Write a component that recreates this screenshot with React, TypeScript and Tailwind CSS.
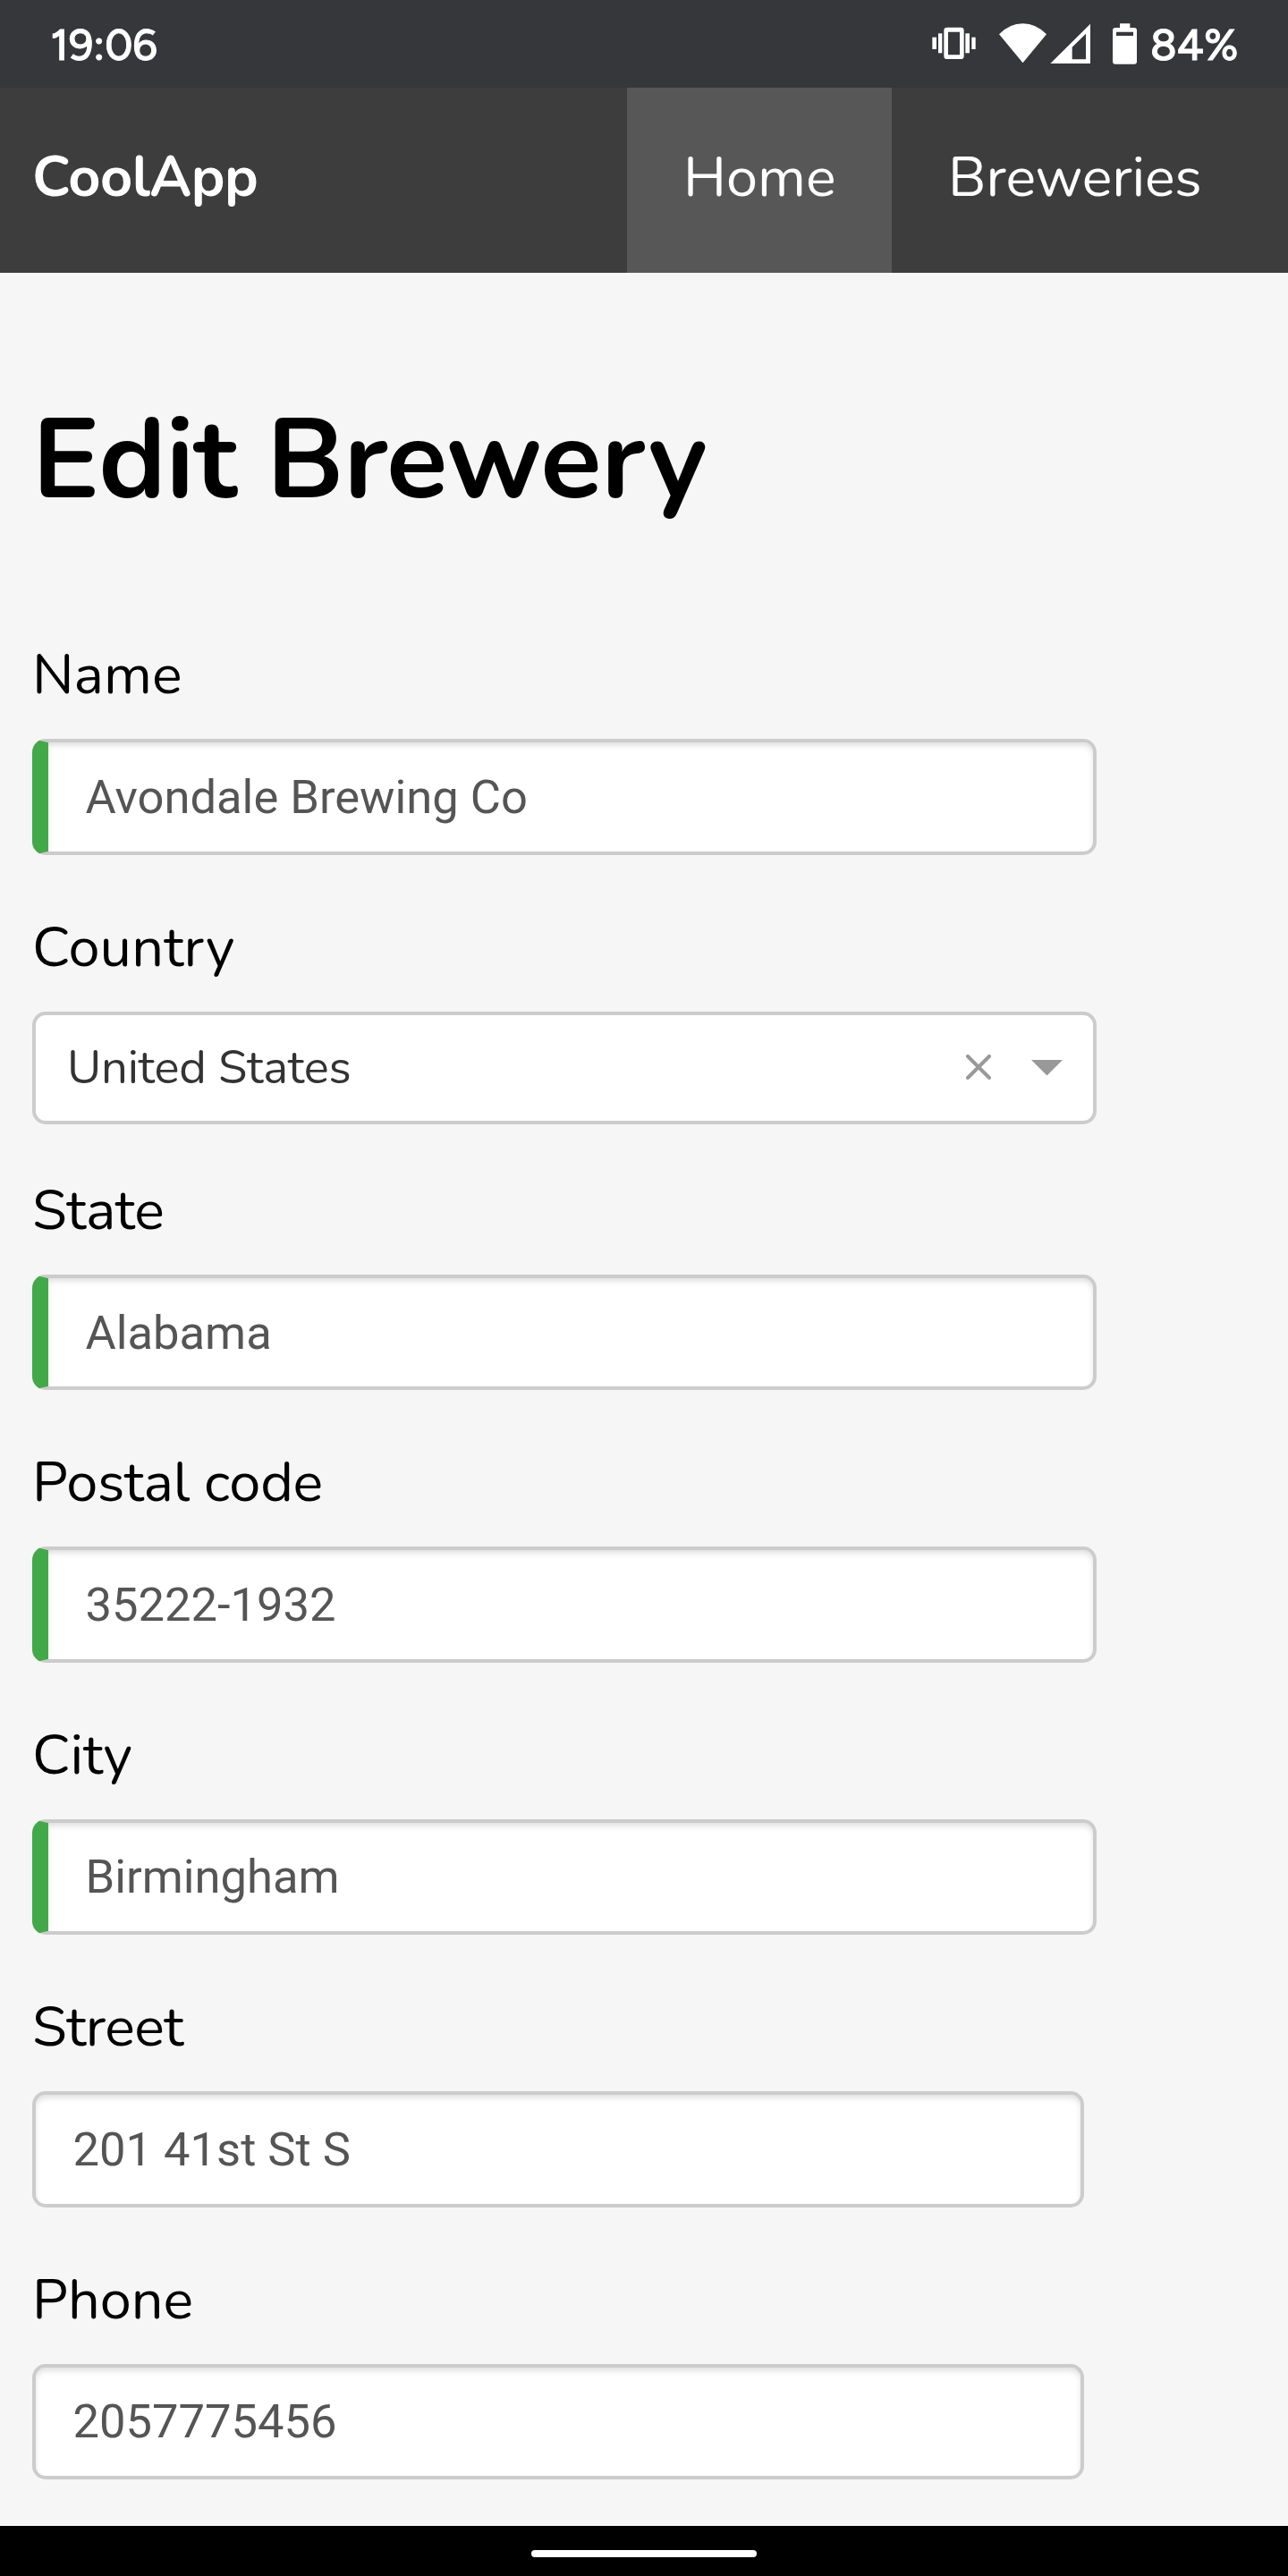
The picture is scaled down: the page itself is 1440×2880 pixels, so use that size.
import React from "react";

type FieldData = { label: string; value: string; required?: boolean; tracking?: string };

const addressFields: FieldData[] = [
  { label: "State", value: "Alabama", required: true, tracking: "tracking-[-0.4px]" },
  { label: "Postal code", value: "35222-1932", required: true, tracking: "tracking-[-0.25px]" },
  { label: "City", value: "Birmingham", required: true },
  { label: "Street", value: "201 41st St S", tracking: "tracking-[-0.5px]" },
  { label: "Phone", value: "2057775456" },
];

function StatusIcons() {
  return (
    <svg className="h-[49px] w-[232px]" viewBox="120 72 696 147" fill="#fff">
      {/* vibrate */}
      <rect x="127" y="125" width="14" height="40" />
      <rect x="147" y="112" width="13" height="66" />
      <rect x="238" y="112" width="14" height="66" />
      <rect x="259" y="125" width="13" height="40" />
      <path
        fillRule="evenodd"
        d="M176 92H223Q233 92 233 102V188Q233 198 223 198H176Q166 198 166 188V102Q166 92 176 92ZM180 107V184H219V107Z"
      />
      {/* wifi */}
      <path d="M351 115Q386 79 430.500 79Q475 79 510 115L430.500 211Z" />
      {/* cell signal */}
      <path fillRule="evenodd" d="M657 80V213H523ZM642 113L596 158V199H642Z" />
      {/* battery */}
      <path
        fillRule="evenodd"
        d="M756 79H790V93H804Q813 93 813 102V206Q813 215 804 215H741Q732 215 732 206V102Q732 93 741 93H756ZM744 107V120H801V107Z"
      />
    </svg>
  );
}

function StatusBar() {
  return (
    <div className="flex h-[98px] items-start justify-between bg-[#36373b] pl-[56.5px] pr-[55.5px] font-['Figtree','Lato',sans-serif] text-[48.5px] font-medium leading-[100px] text-white [-webkit-text-stroke:0.9px_white]">
      <span>19:06</span>
      <div className="flex">
        <div className="mr-[14px] pt-6">
          <StatusIcons />
        </div>
        <span className="w-[98.5px]">84%</span>
      </div>
    </div>
  );
}

function NavBar() {
  return (
    <nav className="flex h-[207px] bg-[#3d3d3d] pl-9 text-[63px] leading-[200px] text-white">
      <a className="mr-auto font-bold tracking-[-0.5px]">CoolApp</a>
      <a className="w-[296px] bg-[#575757] pl-[63px]">Home</a>
      <a className="w-[443px] pl-[63px] tracking-[-0.15px]">Breweries</a>
    </nav>
  );
}

function Label({ children, tracking = "" }: { children: string; tracking?: string }) {
  return <label className={`mb-[29px] block text-[63px] leading-[85px] text-black ${tracking}`}>{children}</label>;
}

function TextField({ label, value, required, tracking }: FieldData) {
  const look = required ? "w-[1190px] border-l-[18px] border-l-[#42a948]" : "w-[1176px]";
  return (
    <div className="h-[304.4px]">
      <Label tracking={tracking}>{label}</Label>
      <input
        className={`block h-[129.4px] rounded-[15px] border-4 border-[#ccc] bg-white px-[41.5px] font-['Roboto',sans-serif] text-[52.5px] text-[#555] shadow-[inset_0_4px_7px_-1px_#ddd] outline-none ${look}`}
        defaultValue={value}
      />
    </div>
  );
}

function CountrySelect() {
  return (
    <div className="h-[294.4px]">
      <Label tracking="tracking-[0.2px]">Country</Label>
      <div className="flex h-[126px] w-[1190px] items-center rounded-[15px] border-4 border-[#ccc] bg-white pl-[35px] pr-[34px] text-[52.5px] leading-[118px] text-[#333]">
        <span className="mr-auto tracking-[-0.2px]">United States</span>
        <svg
          className="mb-[2px] mr-[45px] size-7"
          viewBox="0 0 28 28"
          stroke="#999"
          strokeWidth="4"
          strokeLinecap="round"
        >
          <path d="M2 2L26 26M26 2L2 26" />
        </svg>
        <svg className="h-[18px] w-[35px]" viewBox="0 0 35 18" fill="#999">
          <path d="M0 0H35L17.500 17.500Z" />
        </svg>
      </div>
    </div>
  );
}

export default function App() {
  return (
    <div className="flex h-[2880px] w-[1440px] flex-col overflow-hidden bg-[#f6f6f6] font-['Nunito','Lato',sans-serif]">
      <StatusBar />
      <NavBar />
      <main className="h-[2519px] px-9 pt-[124px]">
        <h1 className="mb-[111.2px] text-[126px] font-bold leading-[172px] tracking-[-0.6px] text-black">
          Edit Brewery
        </h1>
        <TextField label="Name" value="Avondale Brewing Co" required />
        <CountrySelect />
        {addressFields.map((field) => (
          <TextField key={field.label} {...field} />
        ))}
      </main>
      <div className="flex h-14 justify-center bg-black pt-[27px]">
        <div className="h-2 w-[252px] rounded-full bg-white" />
      </div>
    </div>
  );
}
